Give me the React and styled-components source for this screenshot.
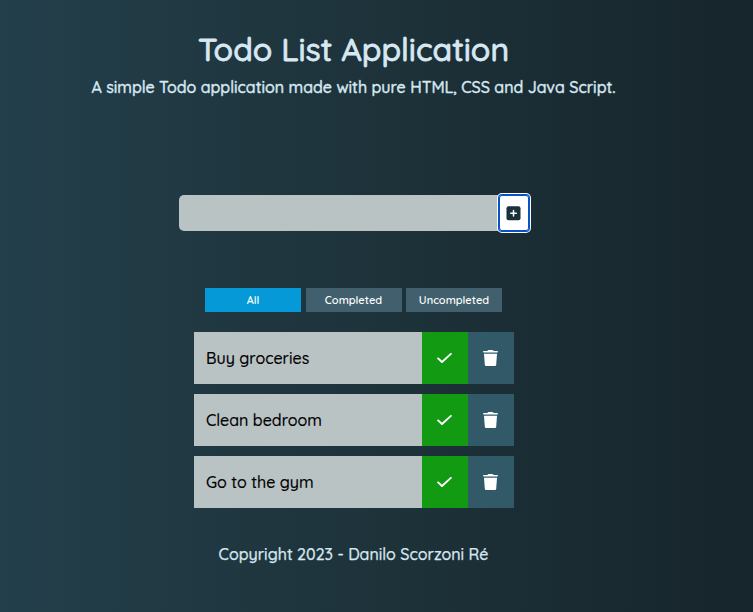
import React from "react";
import styled, { createGlobalStyle } from "styled-components";

const GlobalStyle = createGlobalStyle`
  *, *::before, *::after { box-sizing: border-box; }
  body {
    margin: 0;
    font-family: Quicksand, Lato, sans-serif;
    overflow: hidden;
  }
  button, input { font: inherit; border: 0; padding: 0; margin: 0; }
`;

const Page = styled.div`
  display: flex;
  flex-direction: column;
  align-items: center;
  width: 100%;
  height: 612px;
  padding-right: 45px;
  background: linear-gradient(to right, #233f4b, #1d3138 55%, #16252b);
  color: #d7e8f2;
`;

const Header = styled.header`
  display: flex;
  flex-direction: column;
  align-items: center;
  height: 195px;
  padding: 28px 1px 0 0;
  white-space: nowrap;
`;

const Title = styled.h1`
  margin: 0;
  font-size: 32px;
  font-weight: 500;
  line-height: 42px;
  -webkit-text-stroke: 0.8px currentColor;
`;

const Subtitle = styled.p`
  margin: 7px 0 0;
  font-size: 16px;
  font-weight: 500;
  line-height: 20px;
  -webkit-text-stroke: 0.4px currentColor;
`;

const Form = styled.form`
  display: flex;
  align-items: center;
  width: 350px;
  height: 36px;
`;

const TaskInput = styled.input`
  flex: 1;
  min-width: 0;
  height: 36px;
  border-radius: 5px 0 0 5px;
  background: #bac3c4;
  outline: 0;
`;

const AddButton = styled.button`
  display: flex;
  align-items: center;
  justify-content: center;
  width: 30px;
  height: 36px;
  padding-right: 1px;
  border-radius: 3px;
  background: #fff;
  box-shadow: 0 0 0 1px #0753c8, 0 0 0 2px #fff, inset 0 0 0 1px #0753c8;
`;

const Filters = styled.nav`
  display: flex;
  gap: 4.5px;
  margin: 57px 1px 0 0;
`;

const FilterButton = styled.button`
  width: 96px;
  height: 24px;
  background: ${({ $active }) => ($active ? "#059ad7" : "#415f6c")};
  color: #fff;
  font-size: 11px;
  font-weight: 600;
`;

const TaskList = styled.ul`
  display: flex;
  flex-direction: column;
  gap: 10px;
  width: 320px;
  margin: 20px 0 0;
  padding: 0;
  list-style: none;
`;

const Task = styled.li`
  display: flex;
  height: 52px;
  background: #bac3c4;
  color: #000;
`;

const TaskName = styled.span`
  flex: 1;
  padding-left: 12px;
  font-size: 16px;
  font-weight: 500;
  line-height: 52px;
  -webkit-text-stroke: 0.15px currentColor;
`;

const TaskAction = styled.button`
  display: flex;
  align-items: center;
  justify-content: center;
  width: 46px;
  padding-right: 1px;
  background: ${({ $done }) => ($done ? "#129b12" : "#315968")};
  color: #fff;
`;

const Footer = styled.footer`
  margin-top: 36px;
  padding-right: 1px;
  font-size: 16px;
  font-weight: 500;
  line-height: 20px;
  -webkit-text-stroke: 0.25px currentColor;
`;

const PlusIcon = () => (
  <svg width="15" height="15" viewBox="0 0 15 15" aria-hidden="true">
    <rect x="0.5" y="0.2" width="14" height="14" rx="2" fill="#1b3038" />
    <path d="M7.5 4.4V10M4.7 7.2h5.6" stroke="#fff" strokeWidth="1.5" strokeLinecap="round" />
  </svg>
);

const CheckIcon = () => (
  <svg width="15" height="16" viewBox="0 0 15 16" fill="none" aria-hidden="true">
    <path d="M1.1 8.4 5 12 13.9 3.9" stroke="currentColor" strokeWidth="1.9" strokeLinecap="round" strokeLinejoin="round" />
  </svg>
);

const TrashIcon = () => (
  <svg width="15" height="16" viewBox="0 0 15 16" fill="currentColor" aria-hidden="true">
    <path d="M4.7.6Q5 0 5.6 0h3.8q.6 0 .9.6l.3.4h3.5q.9 0 .9.8t-.9.8H.9Q0 2.6 0 1.8T.9 1h3.5Z" />
    <path d="M1 3.7h13l-.8 11q-.1 1.3-1.4 1.3H3.2q-1.3 0-1.4-1.3Z" />
  </svg>
);

const filters = ["All", "Completed", "Uncompleted"];
const tasks = ["Buy groceries", "Clean bedroom", "Go to the gym"];

export default function App() {
  return (
    <>
      <GlobalStyle />
      <Page>
        <Header>
          <Title>Todo List Application</Title>
          <Subtitle>A simple Todo application made with pure HTML, CSS and Java Script.</Subtitle>
        </Header>
        <Form onSubmit={(event) => event.preventDefault()}>
          <TaskInput type="text" aria-label="New task" />
          <AddButton type="submit" aria-label="Add task">
            <PlusIcon />
          </AddButton>
        </Form>
        <Filters>
          {filters.map((name) => (
            <FilterButton key={name} $active={name === "All"}>
              {name}
            </FilterButton>
          ))}
        </Filters>
        <TaskList>
          {tasks.map((name) => (
            <Task key={name}>
              <TaskName>{name}</TaskName>
              <TaskAction $done aria-label="Complete">
                <CheckIcon />
              </TaskAction>
              <TaskAction aria-label="Delete">
                <TrashIcon />
              </TaskAction>
            </Task>
          ))}
        </TaskList>
        <Footer>Copyright 2023 - Danilo Scorzoni Ré</Footer>
      </Page>
    </>
  );
}
